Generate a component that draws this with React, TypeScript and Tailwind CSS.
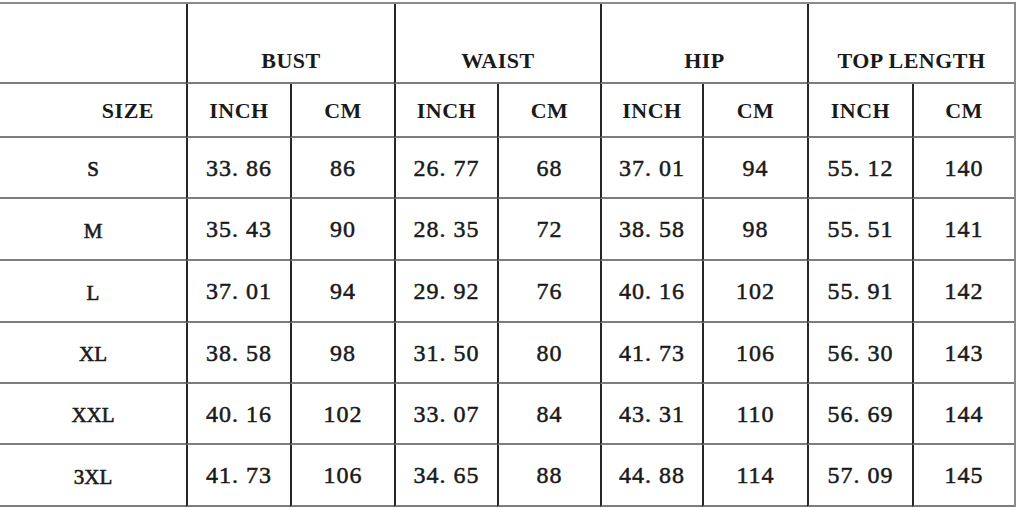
const groups = ["BUST", "WAIST", "HIP", "TOP LENGTH"];

const rows = [
  { size: "S", values: ["33. 86", "86", "26. 77", "68", "37. 01", "94", "55. 12", "140"] },
  { size: "M", values: ["35. 43", "90", "28. 35", "72", "38. 58", "98", "55. 51", "141"] },
  { size: "L", values: ["37. 01", "94", "29. 92", "76", "40. 16", "102", "55. 91", "142"] },
  { size: "XL", values: ["38. 58", "98", "31. 50", "80", "41. 73", "106", "56. 30", "143"] },
  { size: "XXL", values: ["40. 16", "102", "33. 07", "84", "43. 31", "110", "56. 69", "144"] },
  { size: "3XL", values: ["41. 73", "106", "34. 65", "88", "44. 88", "114", "57. 09", "145"] },
];

const line = "border-b-2 border-b-[#7c7c7c]";
const vline = "border-l-2 border-l-[#262626]";
const head = "text-[22px] font-bold tracking-[0.5px]";
const cell = "text-[24px] tracking-[1px] whitespace-pre [-webkit-text-stroke:0.5px_#1a1a1a]";

export default function App() {
  return (
    <div className="w-[1024px] h-[508px] bg-white overflow-hidden pt-[2px] text-[#1a1a1a] font-['Liberation_Serif',serif]">
      <div className="w-[1016px] border-t-2 border-t-[#8a8a8a] border-r-2 border-r-[#8a8a8a] grid grid-cols-[186px_104px_104px_103px_103px_102px_105px_105px_102px] grid-rows-[80px_54px_61px_62px_62px_61px_61px_62px]">
        {/* group header */}
        <div className={line} />
        {groups.map((g) => (
          <div key={g} className={`${line} ${vline} col-span-2 flex items-end justify-center pb-[5px] ${head}`}>
            {g}
          </div>
        ))}

        {/* unit header */}
        <div className={`${line} flex items-center justify-end pr-[32px] ${head}`}>SIZE</div>
        {groups.map((g) => (
          <div key={g} className="contents">
            <div className={`${line} ${vline} flex items-center justify-center ${head}`}>INCH</div>
            <div className={`${line} ${vline} flex items-center justify-center ${head}`}>CM</div>
          </div>
        ))}

        {/* data */}
        {rows.map((r) => (
          <div key={r.size} className="contents">
            <div className={`${line} flex items-center justify-center pt-[5px] text-[21px] [-webkit-text-stroke:0.6px_#1a1a1a]`}>
              {r.size}
            </div>
            {r.values.map((v, i) => (
              <div key={i} className={`${line} ${vline} flex items-center justify-center ${cell}`}>
                {v}
              </div>
            ))}
          </div>
        ))}
      </div>
    </div>
  );
}
